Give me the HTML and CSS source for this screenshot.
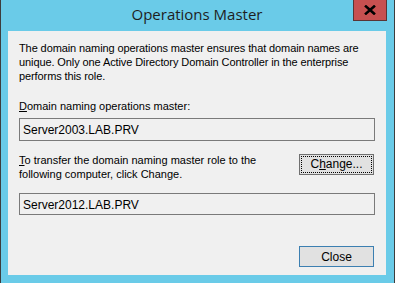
FILE: index.html
```html
<!DOCTYPE html>
<html lang="en">
<head>
  <meta charset="UTF-8">
  <title>Operations Master</title>
  <link rel="stylesheet" href="styles.css">
</head>
<body>
  <div class="window">
    <div class="titlebar">
      <span class="title">Operations Master</span>
      <div class="close-x">
        <svg width="12" height="10" viewBox="0 0 12 10">
          <path d="M2 1.5 L10 8.5 M10 1.5 L2 8.5" stroke="#000" stroke-width="2.6" stroke-linecap="square"/>
        </svg>
      </div>
    </div>

    <div class="client">
      <p class="intro">The domain naming operations master ensures that domain names are unique. Only one Active Directory Domain Controller in the enterprise performs this role.</p>

      <label class="label"><u>D</u>omain naming operations master:</label>
      <div class="field">Server2003.LAB.PRV</div>

      <div class="transfer">
        <p class="label"><u>T</u>o transfer the domain naming master role to the following computer, click Change.</p>
        <button class="btn btn-focus"><span>C<u>h</u>ange...</span></button>
      </div>
      <div class="field field-2">Server2012.LAB.PRV</div>

      <div class="footer">
        <button class="btn btn-default">Close</button>
      </div>
    </div>
  </div>
</body>
</html>
```

FILE: styles.css
```css
* {
  margin: 0;
  padding: 0;
  box-sizing: border-box;
}

body {
  width: 395px;
  height: 283px;
  overflow: hidden;
  font-family: 'Liberation Sans', Arial, sans-serif;
  font-size: 11px;
  color: #000;
}

.window {
  width: 395px;
  height: 283px;
  background: #6acbe8;
  border-left: 1px solid #3d3d3d;
  border-right: 1px solid #3d3d3d;
  display: flex;
  flex-direction: column;
  padding: 0 8px 8px 7px;
}

.titlebar {
  height: 31px;
  flex: none;
  display: flex;
  justify-content: center;
  position: relative;
}

.title {
  font-family: 'Open Sans', 'Noto Sans', sans-serif;
  font-size: 15px;
  color: #1e1e1e;
  padding-top: 4px;
}

.close-x {
  position: absolute;
  top: 0;
  right: -1px;
  width: 34px;
  height: 21px;
  background: #c75050;
  border: 1px solid #5a3434;
  border-top: none;
  display: flex;
  align-items: center;
  justify-content: center;
}

.client {
  flex: 1;
  background: #f0f0f0;
  padding: 10px 11px 0 11px;
  display: flex;
  flex-direction: column;
  line-height: 14px;
}

.intro {
  width: 352px;
  letter-spacing: -0.1px;
}

.label {
  display: block;
  margin-top: 16px;
}

.field {
  margin-top: 5px;
  width: 356px;
  height: 23px;
  border: 1px solid #7a7a7a;
  padding: 4px 3px;
  font-size: 12px;
}

.transfer {
  display: flex;
  justify-content: space-between;
  align-items: flex-start;
  margin-top: 12px;
}

.transfer .label {
  margin-top: 0;
  width: 272px;
}

.btn {
  width: 75px;
  height: 21px;
  flex: none;
  background: #e1e1e1;
  border: 1px solid #adadad;
  font-family: inherit;
  font-size: 12px;
  color: #000;
  margin-right: 1px;
}

.btn-focus {
  margin-top: 1px;
  border-color: #707070;
  padding: 1px;
}

.btn-focus span {
  display: block;
  height: 100%;
  border: 1px dotted #000;
  line-height: 15px;
}

.field-2 {
  margin-top: 12px;
  height: 22px;
}

.footer {
  display: flex;
  justify-content: flex-end;
  margin-top: 31px;
}

.btn-default {
  border-color: #3c7fb1;
}
```
